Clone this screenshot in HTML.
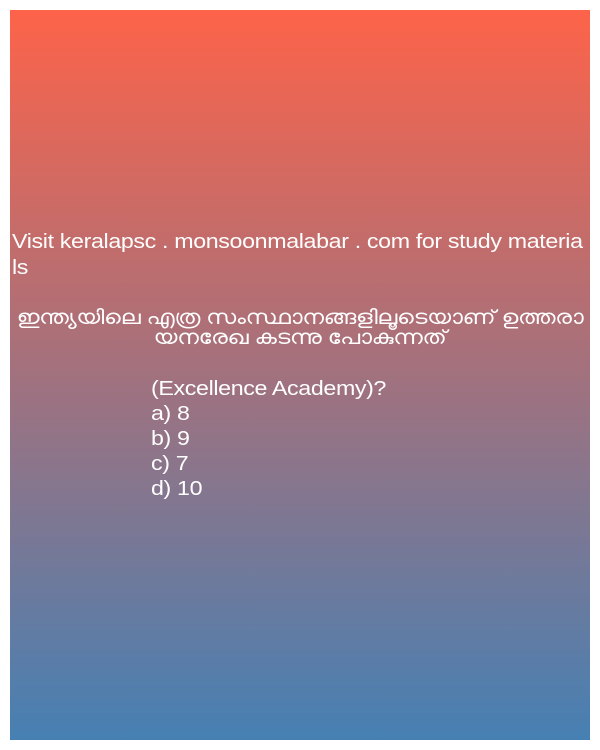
<!DOCTYPE html>
<html><head><meta charset="utf-8"><style>
html,body{margin:0;padding:0;background:#fff;width:600px;height:750px;overflow:hidden}
.box{position:absolute;left:10px;top:10px;width:580px;height:730px;background:linear-gradient(#fd6349,#4680b3);color:#fff;font-family:"Liberation Sans",sans-serif;font-size:20px}
.t{position:absolute;white-space:nowrap;letter-spacing:-0.3px;transform-origin:0 0;transform:scaleX(1.16)}
</style></head><body><div class="box">
<div class="t" style="left:2px;top:221px">Visit keralapsc . monsoonmalabar . com for study materia</div>
<div class="t" style="left:2px;top:247px">ls</div>
<div class="t" style="left:0;width:580px;text-align:center;top:298px;line-height:20px;white-space:normal;transform-origin:290px 0;transform:scaleX(1.17)">ഇന്ത്യയിലെ എത്ര സംസ്ഥാനങ്ങളിലൂടെയാണ് ഉത്തരാ<br>യനരേഖ കടന്നു പോകുന്നത്</div>
<div class="t" style="left:141px;top:368px">(Excellence Academy)?</div>
<div class="t" style="left:141px;top:393px">a) 8</div>
<div class="t" style="left:141px;top:418px">b) 9</div>
<div class="t" style="left:141px;top:443px">c) 7</div>
<div class="t" style="left:141px;top:468px">d) 10</div>
</div></body></html>
